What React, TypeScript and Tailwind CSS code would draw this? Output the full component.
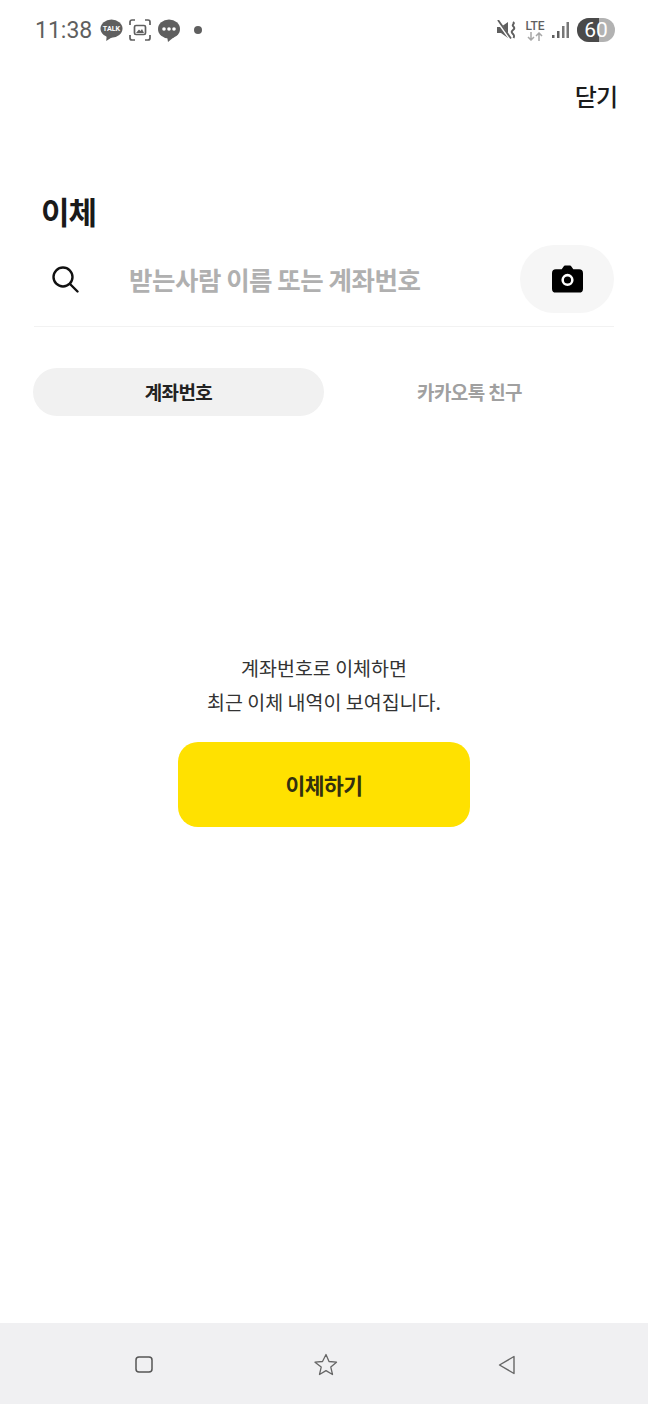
const font = { fontFamily: '"Noto Sans CJK KR", "Noto Sans", sans-serif' };

function StatusBar() {
  return (
    <div className="flex h-[60px] items-center justify-between pl-[35px] pr-[33px] text-[#5f5f5f]">
      <div className="flex items-center">
        <span className="w-[57px] text-[23px] leading-none" style={{ fontFamily: 'Roboto, sans-serif' }}>11:38</span>
        <svg width="23" height="23" viewBox="0 0 24 24" className="ml-[8px]">
          <ellipse cx="12" cy="10" rx="11.500" ry="9.500" fill="#5f5f5f" />
          <path d="M7 17l-.5 6 6-4z" fill="#5f5f5f" />
          <text x="12" y="13" textAnchor="middle" fontSize="7.500" fontWeight="700" fill="#fff" fontFamily="Roboto, sans-serif">TALK</text>
        </svg>
        <svg width="22" height="22" viewBox="0 0 22 22" className="ml-[6px]" fill="none" stroke="#5f5f5f" strokeWidth="1.700">
          <path d="M1 6V3a2 2 0 0 1 2-2h3M16 1h3a2 2 0 0 1 2 2v3M21 16v3a2 2 0 0 1-2 2h-3M6 21H3a2 2 0 0 1-2-2v-3" />
          <rect x="5.500" y="6.500" width="11" height="9" rx="1.500" />
          <path d="M7 14l3-3.500 1.500 1.500 1.500-2 2 4z" fill="#5f5f5f" stroke="none" />
        </svg>
        <svg width="22" height="23" viewBox="0 0 22 23" className="ml-[7px]">
          <ellipse cx="11" cy="10" rx="11" ry="9.500" fill="#5f5f5f" />
          <path d="M9 17l1 6 6-5z" fill="#5f5f5f" />
          <circle cx="6" cy="10" r="1.800" fill="#fff" />
          <circle cx="11" cy="10" r="1.800" fill="#fff" />
          <circle cx="16" cy="10" r="1.800" fill="#fff" />
        </svg>
        <span className="ml-[14px] h-[8px] w-[8px] rounded-full bg-[#5f5f5f]" />
      </div>
      <div className="flex items-center">
        <svg width="19" height="20" viewBox="0 0 19 20">
          <path d="M0 7h4l7-5v16l-7-5H0z" fill="#5f5f5f" />
          <path d="M1 1.500l12 17" stroke="#fff" strokeWidth="3" />
          <path d="M1 0l13 18.500" stroke="#5f5f5f" strokeWidth="1.800" />
          <path d="M16 2c2.500 1.500-1.500 2.500 0 4s2 2.500 0 4-1.500 2.500 0 4 1.500 2 .5 4" fill="none" stroke="#5f5f5f" strokeWidth="2" />
        </svg>
        <div className="ml-[9px] flex w-[20px] flex-col items-center">
          <span className="text-[12px] font-medium leading-[12px]" style={{ fontFamily: 'Roboto, sans-serif' }}>LTE</span>
          <svg width="16" height="9" viewBox="0 0 16 9" fill="none" stroke="#a8a8a8" strokeWidth="1.500">
            <path d="M4 0v8M1 5l3 3 3-3M12 9V1M9 4l3-3 3 3" />
          </svg>
        </div>
        <svg width="17" height="18" viewBox="0 0 17 18" fill="#5f5f5f" className="ml-[7px]">
          <rect x="0" y="14" width="2.500" height="3" />
          <rect x="5" y="10" width="2.500" height="7" />
          <rect x="10" y="5" width="2.500" height="12" fill="#777" />
          <rect x="14.500" y="1" width="2.500" height="16" fill="#777" />
        </svg>
        <div className="relative ml-[8px] flex h-[24px] w-[38px] items-center justify-center overflow-hidden rounded-full bg-[#b2b2b2]">
          <span className="absolute inset-y-0 left-0 w-[22px] bg-[#4a4a4a]" />
          <span className="relative text-[21px] leading-none text-white" style={{ fontFamily: 'Roboto, sans-serif' }}>60</span>
        </div>
      </div>
    </div>
  );
}

export default function App() {
  return (
    <div className="flex h-[1404px] w-[648px] flex-col overflow-hidden bg-white" style={font}>
      <StatusBar />
      <div className="flex justify-end pr-[31px] pt-[18px]">
        <button className="text-[24px] font-medium leading-[36px] tracking-[-1px] text-[#1c1c1c]">닫기</button>
      </div>
      <h1 className="ml-[41px] mt-[75px] text-[31px] font-bold leading-[44px] tracking-[-1px] text-[#1a1a1a]">이체</h1>

      <div className="mx-[34px] mt-[12px] flex h-[82px] items-start border-b border-[#f2f2f2]">
        <div className="flex h-[68px] w-full items-center">
          <svg width="28" height="28" viewBox="0 0 28 28" fill="none" stroke="#111" strokeWidth="2.400" strokeLinecap="round" className="ml-[17px]">
            <circle cx="12" cy="12" r="9.500" />
            <path d="M19 19l7.500 7.500" />
          </svg>
          <span className="ml-[50px] text-[25.500px] font-bold tracking-[-0.5px] text-[#b0b0b0]">받는사람 이름 또는 계좌번호</span>
          <button className="ml-auto flex h-[68px] w-[94px] items-center justify-center rounded-full bg-[#f6f6f6]">
            <svg width="31" height="28" viewBox="0 0 32 28">
              <path d="M4 4h6l2-3a2 2 0 0 1 1.500-1h5a2 2 0 0 1 1.500 1l2 3h6a4 4 0 0 1 4 4v16a4 4 0 0 1-4 4H4a4 4 0 0 1-4-4V8a4 4 0 0 1 4-4z" fill="#000" />
              <circle cx="16" cy="15" r="5" fill="none" stroke="#fff" strokeWidth="2.600" />
            </svg>
          </button>
        </div>
      </div>

      <div className="mx-[33px] mt-[41px] flex h-[48px]">
        <div className="flex w-[291px] items-center justify-center rounded-full bg-[#f1f1f1] text-[19px] font-bold tracking-[-0.6px] text-[#222]">계좌번호</div>
        <div className="flex w-[291px] items-center justify-center text-[19px] font-bold tracking-[-0.6px] text-[#a0a0a0]">카카오톡 친구</div>
      </div>

      <div className="mt-[235px] flex flex-col items-center text-[19.500px] leading-[34px] text-[#333]">
        <p>계좌번호로 이체하면</p>
        <p>최근 이체 내역이 보여집니다.</p>
        <button className="mt-[23px] flex h-[85px] w-[292px] items-center justify-center rounded-[20px] bg-[#ffe100] text-[21.500px] font-bold tracking-[-0.5px] text-[#33300f]">이체하기</button>
      </div>

      <div className="mt-auto flex h-[81px] items-center bg-[#f0f0f2] pt-[2px]">
        <div className="flex w-[648px] items-center justify-between pl-[135px] pr-[132px]">
          <svg width="18" height="17" viewBox="0 0 18 17" fill="none" stroke="#555" strokeWidth="1.500">
            <rect x="1" y="1" width="16" height="15" rx="3" />
          </svg>
          <svg width="24" height="23" viewBox="0 0 24 23" fill="none" stroke="#666" strokeWidth="1.300" strokeLinejoin="round">
            <path d="M12 1.500l3 7 7.500.7-5.700 4.900 1.700 7.400-6.500-3.900-6.500 3.900 1.700-7.400L1 9.200l7.500-.7z" />
          </svg>
          <svg width="18" height="20" viewBox="0 0 18 20" fill="none" stroke="#666" strokeWidth="1.400" strokeLinejoin="round">
            <path d="M16 1.500v17L1.500 10z" />
          </svg>
        </div>
      </div>
    </div>
  );
}
